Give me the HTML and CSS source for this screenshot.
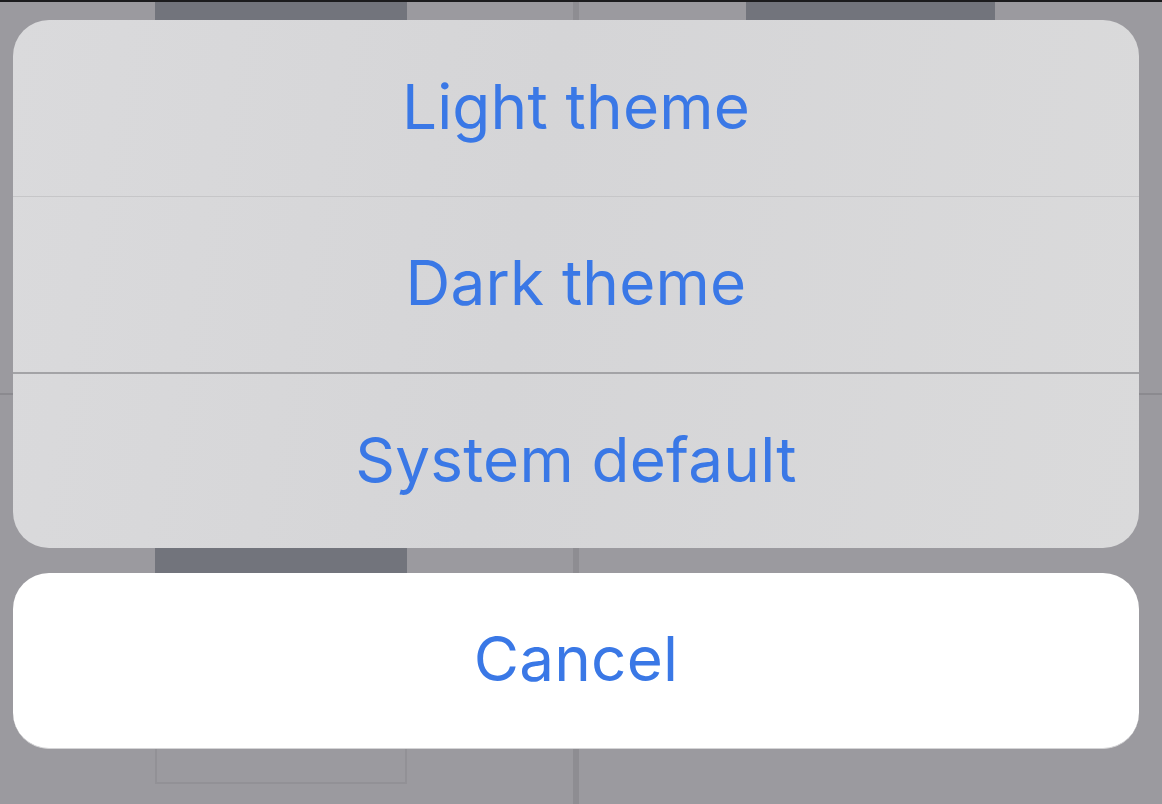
FILE: index.html
```html
<!DOCTYPE html>
<html lang="en">
<head>
  <meta charset="UTF-8">
  <meta name="viewport" content="width=device-width, initial-scale=1.0">
  <title>Theme</title>
  <link rel="stylesheet" href="styles.css">
</head>
<body>
  <!-- Screen behind the sheet (dimmed) -->
  <div class="screen">
    <div class="status-strip"></div>
    <div class="backdrop">
      <div class="gutter-left"></div>
      <div class="col-a">
        <div class="block-dark"></div>
        <div class="block-outline"></div>
      </div>
      <div class="gutter-mid"></div>
      <div class="divider"></div>
      <div class="gutter-mid2"></div>
      <div class="col-b">
        <div class="block-dark short"></div>
      </div>
    </div>
  </div>

  <!-- Action sheet -->
  <div class="sheet">
    <div class="sheet-group">
      <button class="sheet-btn">Light theme</button>
      <button class="sheet-btn sep-light">Dark theme</button>
      <button class="sheet-btn sep-dark">System default</button>
    </div>
    <button class="sheet-btn cancel">Cancel</button>
  </div>
</body>
</html>
```

FILE: styles.css
```css
/* Reset */
* {
  margin: 0;
  padding: 0;
  box-sizing: border-box;
}

body {
  width: 1162px;
  height: 804px;
  overflow: hidden;
  position: relative;
  background: #9b9a9f;
  font-family: 'Inter', 'Roboto', sans-serif;
}

/* Background screen */
.screen {
  display: flex;
  flex-direction: column;
  height: 100%;
}

.status-strip {
  height: 2px;
  background: #1c1c1e;
}

.backdrop {
  flex: 1;
  display: flex;
  background: linear-gradient(to bottom, transparent 391px, #8b8a8f 391px, #8b8a8f 393px, transparent 393px);
}

.gutter-left {
  width: 155px;
}

.col-a {
  width: 252px;
  display: flex;
  flex-direction: column;
}

.block-dark {
  height: 600px;
  background: #72747c;
}

.block-dark.short {
  height: 120px;
}

.block-outline {
  height: 182px;
  border: 2px solid #929196;
  border-top: none;
}

.gutter-mid {
  width: 166px;
}

.divider {
  width: 6px;
  background: #8e8d92;
}

.gutter-mid2 {
  width: 167px;
}

.col-b {
  width: 249px;
}

/* Action sheet overlay */
.sheet {
  position: absolute;
  left: 13px;
  top: 20px;
  width: 1126px;
  display: flex;
  flex-direction: column;
  gap: 25px;
}

.sheet-group {
  display: flex;
  flex-direction: column;
  border-radius: 36px;
  overflow: hidden;
  background: linear-gradient(100deg, #dadadc, #d5d5d7 45%, #dadadb);
}

.sheet-btn {
  height: 176px;
  border: none;
  background: transparent;
  font-family: inherit;
  font-size: 62px;
  font-weight: 400;
  color: #3a78e6;
  letter-spacing: 0.2px;
  display: flex;
  align-items: center;
  justify-content: center;
  padding-bottom: 4px;
}

.sheet-btn.sep-light {
  border-top: 1px solid #c6c6c8;
}

.sheet-btn.sep-dark {
  border-top: 2px solid #a3a3a6;
}

.sheet-btn.cancel {
  background: #ffffff;
  border-radius: 36px;
  border-bottom: 1px solid #d4d4d6;
}
```
